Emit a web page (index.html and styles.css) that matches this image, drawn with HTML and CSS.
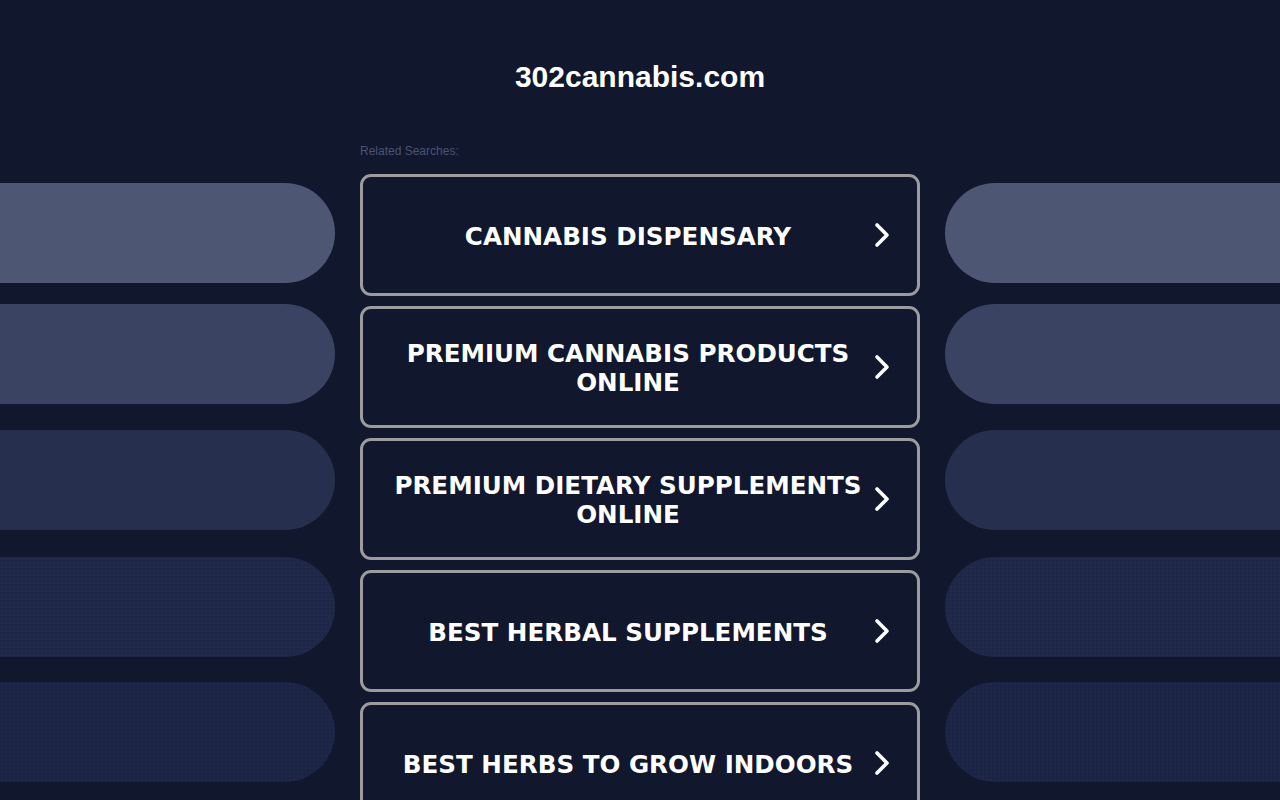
FILE: index.html
```html
<!DOCTYPE html>
<html lang="en">
<head>
<meta charset="utf-8">
<title>302cannabis.com</title>
<link rel="stylesheet" href="styles.css">
</head>
<body>
<header class="header">
  <h1 class="domain">302cannabis.com</h1>
</header>
<main class="layout">
  <div class="side side-left">
    <div class="pill pill-1"></div>
    <div class="pill pill-2"></div>
    <div class="pill pill-3"></div>
    <div class="pill pill-4 dotted"></div>
    <div class="pill pill-5 dotted"></div>
  </div>
  <div class="center">
    <div class="related">Related Searches:</div>
    <ul class="links">
      <li><a class="link" href="#"><span class="link-text">CANNABIS DISPENSARY</span><svg class="chev" viewBox="0 0 16 26"><polyline points="3,3 13,13 3,23"/></svg></a></li>
      <li><a class="link" href="#"><span class="link-text">PREMIUM CANNABIS PRODUCTS ONLINE</span><svg class="chev" viewBox="0 0 16 26"><polyline points="3,3 13,13 3,23"/></svg></a></li>
      <li><a class="link" href="#"><span class="link-text">PREMIUM DIETARY SUPPLEMENTS ONLINE</span><svg class="chev" viewBox="0 0 16 26"><polyline points="3,3 13,13 3,23"/></svg></a></li>
      <li><a class="link" href="#"><span class="link-text">BEST HERBAL SUPPLEMENTS</span><svg class="chev" viewBox="0 0 16 26"><polyline points="3,3 13,13 3,23"/></svg></a></li>
      <li><a class="link" href="#"><span class="link-text">BEST HERBS TO GROW INDOORS</span><svg class="chev" viewBox="0 0 16 26"><polyline points="3,3 13,13 3,23"/></svg></a></li>
    </ul>
  </div>
  <div class="side side-right">
    <div class="pill pill-1"></div>
    <div class="pill pill-2"></div>
    <div class="pill pill-3"></div>
    <div class="pill pill-4 dotted"></div>
    <div class="pill pill-5 dotted"></div>
  </div>
</main>
</body>
</html>
```

FILE: styles.css
```css
html, body {
  margin: 0;
  padding: 0;
  background: #11172d;
  height: 800px;
  overflow: hidden;
}
body {
  font-family: "Liberation Sans", Arial, sans-serif;
  color: #fff;
}
.header {
  padding-top: 59px;
  height: 81px;
  text-align: center;
}
.domain {
  margin: 0;
  font-size: 30px;
  line-height: 36px;
  font-weight: bold;
  color: #fff;
}
.layout {
  display: grid;
  grid-template-columns: 335px 560px 335px;
  column-gap: 25px;
}
.side {
  padding-top: 43px;
  display: flex;
  flex-direction: column;
}
.pill {
  height: 100px;
  flex: none;
}
.side-left .pill { border-radius: 0 50px 50px 0; }
.side-right .pill { border-radius: 50px 0 0 50px; }
.pill-1 { background-color: #4d5673; }
.pill-2 { background-color: #3a4361; margin-top: 21px; }
.pill-3 { background-color: #272f4e; margin-top: 26px; }
.pill-4 { background-color: #1e2747; margin-top: 27px; }
.pill-5 { background-color: #1b2444; margin-top: 25px; }
.dotted {
  background-image: radial-gradient(rgba(50, 64, 100, 0.35) 0.5px, transparent 0.9px);
  background-size: 4px 4px;
}
.center {
  display: flex;
  flex-direction: column;
}
.related {
  font-size: 12px;
  line-height: 20px;
  padding-top: 1px;
  color: #4a5474;
  margin-bottom: 13px;
}
.links {
  list-style: none;
  margin: 0;
  padding: 0;
  display: flex;
  flex-direction: column;
  gap: 10px;
}
.link {
  box-sizing: border-box;
  height: 122px;
  border: 3px solid #9c9c9f;
  border-radius: 11px;
  display: flex;
  align-items: center;
  padding: 2px 27px 0 30px;
  text-decoration: none;
  color: #fff;
}
.link-text {
  flex: 1;
  text-align: center;
  font-family: "DejaVu Sans", Verdana, sans-serif;
  font-weight: bold;
  font-size: 24.6px;
  line-height: 29px;
  margin-right: 11px;
}
.chev {
  width: 16px;
  height: 26px;
  flex: none;
  margin-top: -2px;
  fill: none;
  stroke: #fff;
  stroke-width: 3.6;
  stroke-linecap: round;
  stroke-linejoin: round;
}
```
